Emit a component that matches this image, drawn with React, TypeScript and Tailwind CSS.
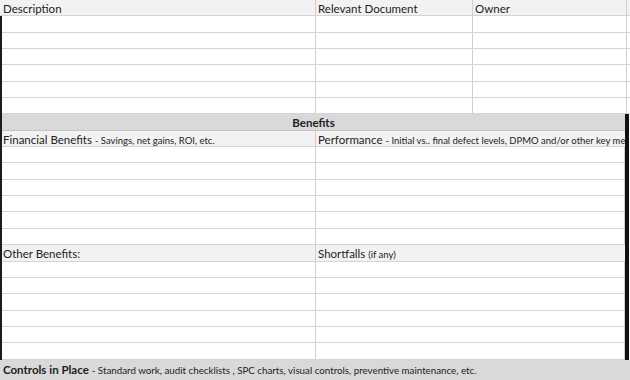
import React from "react";

const ROW = "h-[16.35px] shrink-0";

function BlankRows({ count, split }: { count: number; split: number[] }) {
  return (
    <>
      {Array.from({ length: count }).map((_, i) => (
        <div key={i} className={`${ROW} flex border-b border-[#d4d4d4]`}>
          {split.map((w, j) => (
            <div
              key={j}
              style={{ width: w }}
              className="h-full shrink-0 border-r border-[#cfcfcf]"
            />
          ))}
        </div>
      ))}
    </>
  );
}

export default function App() {
  return (
    <div className="w-[630px] h-[380px] overflow-hidden bg-white font-['Lato',sans-serif] text-[11.5px] text-[#222] leading-[17.5px]">
      {/* Column header */}
      <div className={`${ROW} flex bg-[#f2f2f2] border-b border-[#d4d4d4]`}>
        <div className="w-[316px] shrink-0 border-r border-[#cfcfcf] pl-[3px]">Description</div>
        <div className="w-[157px] shrink-0 border-r border-[#cfcfcf] pl-[2px]">Relevant Document</div>
        <div className="w-[154px] shrink-0 border-r border-[#cfcfcf] pl-[2px]">Owner</div>
      </div>

      <div className="border-l-2 border-[#1c1c1c]">
        {/* Document rows */}
        <BlankRows count={6} split={[314, 157, 154]} />

        {/* Benefits section */}
        <div className="w-[627px] border-r-4 border-[#111]">
          <div className={`${ROW} bg-[#d9d9d9] border-b border-[#c4c4c4] text-center font-bold`}>
            Benefits
          </div>

          <div className={`${ROW} flex bg-[#f2f2f2] border-b border-[#d4d4d4] whitespace-nowrap`}>
            <div className="w-[314px] shrink-0 border-r border-[#cfcfcf] pl-[1px]">
              Financial Benefits{" "}
              <span className="text-[9.5px]">- Savings, net gains, ROI, etc.</span>
            </div>
            <div className="flex-1 pl-[2px] overflow-hidden">
              Performance{" "}
              <span className="text-[9.5px]">
                - Initial vs.. final defect levels, DPMO and/or other key metrics
              </span>
            </div>
          </div>
          <BlankRows count={6} split={[314, 309]} />

          <div className={`${ROW} flex bg-[#f2f2f2] border-b border-[#d4d4d4] whitespace-nowrap`}>
            <div className="w-[314px] shrink-0 border-r border-[#cfcfcf] pl-[1px]">Other Benefits:</div>
            <div className="flex-1 pl-[2px]">
              Shortfalls <span className="text-[9.5px]">(if any)</span>
            </div>
          </div>
          <BlankRows count={6} split={[314, 309]} />
        </div>
      </div>

      {/* Controls */}
      <div className="h-[20px] bg-[#d9d9d9] pl-[3px] whitespace-nowrap leading-[19px]">
        <span className="font-bold">Controls in Place</span>{" "}
        <span className="text-[9.75px]">
          - Standard work, audit checklists , SPC charts, visual controls, preventive maintenance, etc.
        </span>
      </div>
    </div>
  );
}
